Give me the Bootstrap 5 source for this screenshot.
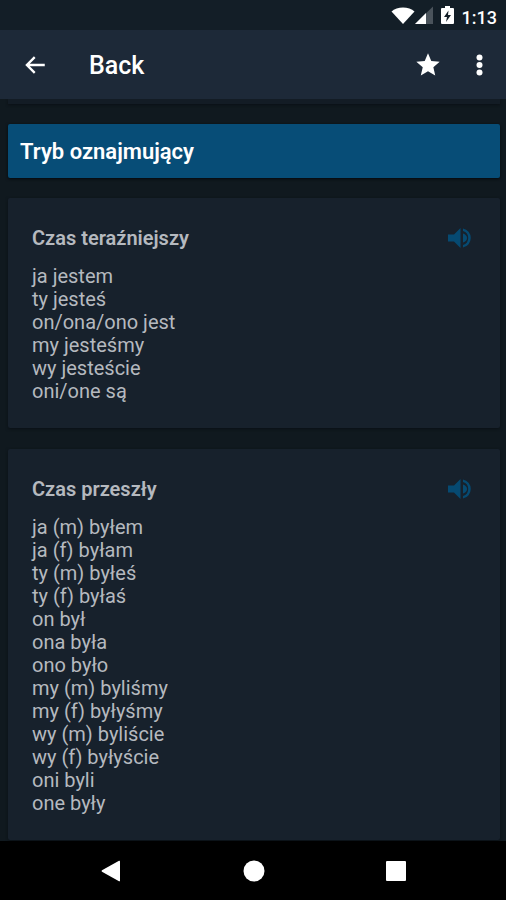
<!DOCTYPE html>
<html lang="pl">
<head>
<meta charset="utf-8">
<meta name="viewport" content="width=device-width, initial-scale=1">
<title>Tryb oznajmujący</title>
<link rel="stylesheet" href="https://cdn.jsdelivr.net/npm/bootstrap@5.3.0/dist/css/bootstrap.min.css">
<style>
body { background: #10191f; color: #b5b9bf; font-family: Roboto, "Liberation Sans", sans-serif; font-size: 20px; line-height: 23px; }
svg { display: block; fill: currentColor; }
.status-bar { background: #131e27; height: 30px; padding: 0 9px; gap: 8px; font-size: 18px; font-weight: 500; }
.app-bar { background: #1d2938; height: 69px; padding: 0 12px 0 22px; }
.app-title { font-size: 25px; line-height: 32px; font-weight: 500; margin-left: 41px; padding-top: 2px; }
.app-actions { gap: 24px; }
.content { padding: 0 6px 0 8px; min-height: 0; }
.previous-end { height: 5px; background: #131c25; margin-bottom: 20px; box-shadow: 0 1px 3px #0a1015; }
.mood { background: #074d77; font-size: 22px; line-height: 28px; font-weight: 600; padding: 14px 12px 12px; border-radius: 2px; box-shadow: 0 1px 3px #05090c; margin-bottom: 20px; }
.tense { background: #17212c; color: #b5b9bf; border-radius: 2px; padding: 28px 25px 25px 24px; margin-bottom: 21px; box-shadow: 0 1px 3px #0a1015; }
.tense-title { font-size: 20px; line-height: 24px; font-weight: 600; }
.tense-head { margin-bottom: 15px; }
.speak { color: #064a72; }
.system-nav { background: #000; height: 59px; padding: 0 39px 0 41px; }
</style>
</head>
<body class="d-flex flex-column vh-100 overflow-hidden">
<div class="status-bar d-flex flex-shrink-0 justify-content-end align-items-center text-white">
  <div class="d-flex align-items-center">
    <svg width="24" height="20" viewBox="0 0 24 20" aria-hidden="true"><path d="M0.5 6.5C6 1 18 1 23.5 6.5L12 19z"/></svg>
    <svg width="18" height="20" viewBox="0 0 18 20" aria-hidden="true"><path d="M0 19L18 1.500V19z" fill="#4a535b"/><path d="M0 19L11 8V19z"/></svg>
  </div>
  <svg width="13" height="20" viewBox="0 0 13 20" aria-hidden="true"><path d="M4 1h5v2h3q1 0 1 1v14q0 1-1 1H1q-1 0-1-1V4q0-1 1-1h3z"/><path d="M7.500 5.500L3 12h3l-1 5 5-7H7z" fill="#131e27"/></svg>
  <span class="pt-1">1:13</span>
</div>
<header class="app-bar d-flex flex-shrink-0 align-items-center text-white">
  <button type="button" class="btn p-0 border-0 text-white" aria-label="Back">
    <svg width="26" height="26" viewBox="0 0 24 24"><path d="M21 10.800H7.200l5.300-5.300L11 4l-8 8 8 8 1.500-1.500L7.200 13.200H21z"/></svg>
  </button>
  <h1 class="app-title mb-0 flex-grow-1">Back</h1>
  <div class="app-actions d-flex align-items-center">
    <button type="button" class="btn p-0 border-0 text-white" aria-label="Favourite">
      <svg width="28" height="28" viewBox="0 0 24 24"><path d="M12 17.300L18.200 21l-1.600-7L22 9.200l-7.200-.6L12 2 9.200 8.600 2 9.200 7.500 14l-1.700 7z"/></svg>
    </button>
    <button type="button" class="btn p-0 border-0 text-white" aria-label="More">
      <svg width="28" height="28" viewBox="0 0 28 28"><circle cx="13.500" cy="6.500" r="3"/><circle cx="13.500" cy="14" r="3"/><circle cx="13.500" cy="21.500" r="3"/></svg>
    </button>
  </div>
</header>
<main class="content flex-grow-1 overflow-hidden">
  <div class="previous-end"></div>
  <h2 class="mood text-white">Tryb oznajmujący</h2>
  <section class="card tense border-0">
    <div class="tense-head d-flex justify-content-between align-items-center">
      <h3 class="tense-title mb-0">Czas teraźniejszy</h3>
      <button type="button" class="speak btn p-0 border-0" aria-label="Odtwórz czas teraźniejszy">
        <svg width="30" height="24" viewBox="0 0 30 24"><path d="M3 8.500h6L15.500 2v20L9 15.500H3z"/><path d="M18 7.500q4 1.500 4 4.500t-4 4.500z"/><path d="M18 2.500a9.700 9.700 0 0 1 0 19v-2.500a7.300 7.300 0 0 0 0-14z"/></svg>
      </button>
    </div>
    <ul class="list-unstyled mb-0">
      <li>ja jestem</li><li>ty jesteś</li><li>on/ona/ono jest</li><li>my jesteśmy</li><li>wy jesteście</li><li>oni/one są</li>
    </ul>
  </section>
  <section class="card tense border-0">
    <div class="tense-head d-flex justify-content-between align-items-center">
      <h3 class="tense-title mb-0">Czas przeszły</h3>
      <button type="button" class="speak btn p-0 border-0" aria-label="Odtwórz czas przeszły">
        <svg width="30" height="24" viewBox="0 0 30 24"><path d="M3 8.500h6L15.500 2v20L9 15.500H3z"/><path d="M18 7.500q4 1.500 4 4.500t-4 4.500z"/><path d="M18 2.500a9.700 9.700 0 0 1 0 19v-2.500a7.300 7.300 0 0 0 0-14z"/></svg>
      </button>
    </div>
    <ul class="list-unstyled mb-0">
      <li>ja (m) byłem</li><li>ja (f) byłam</li><li>ty (m) byłeś</li><li>ty (f) byłaś</li><li>on był</li><li>ona była</li><li>ono było</li><li>my (m) byliśmy</li><li>my (f) byłyśmy</li><li>wy (m) byliście</li><li>wy (f) byłyście</li><li>oni byli</li><li>one były</li>
    </ul>
  </section>
</main>
<nav class="system-nav d-flex flex-shrink-0 justify-content-around align-items-center" aria-label="System">
  <button type="button" class="btn p-0 border-0 text-white" aria-label="System back"><svg width="22" height="22" viewBox="0 0 22 22"><path d="M1 10.200L18 0.800q1-.5 1 .7v19q0 1.200-1 .7L1 11.800q-1-.8 0-1.600z"/></svg></button>
  <button type="button" class="btn p-0 border-0 text-white" aria-label="Home"><svg width="22" height="22" viewBox="0 0 22 22"><circle cx="11" cy="11" r="10.500"/></svg></button>
  <button type="button" class="btn p-0 border-0 text-white" aria-label="Recent apps"><svg width="22" height="22" viewBox="0 0 22 22"><rect x="1" y="1" width="20" height="20" rx="1"/></svg></button>
</nav>
<script src="https://cdn.jsdelivr.net/npm/bootstrap@5.3.0/dist/js/bootstrap.bundle.min.js"></script>
</body>
</html>
